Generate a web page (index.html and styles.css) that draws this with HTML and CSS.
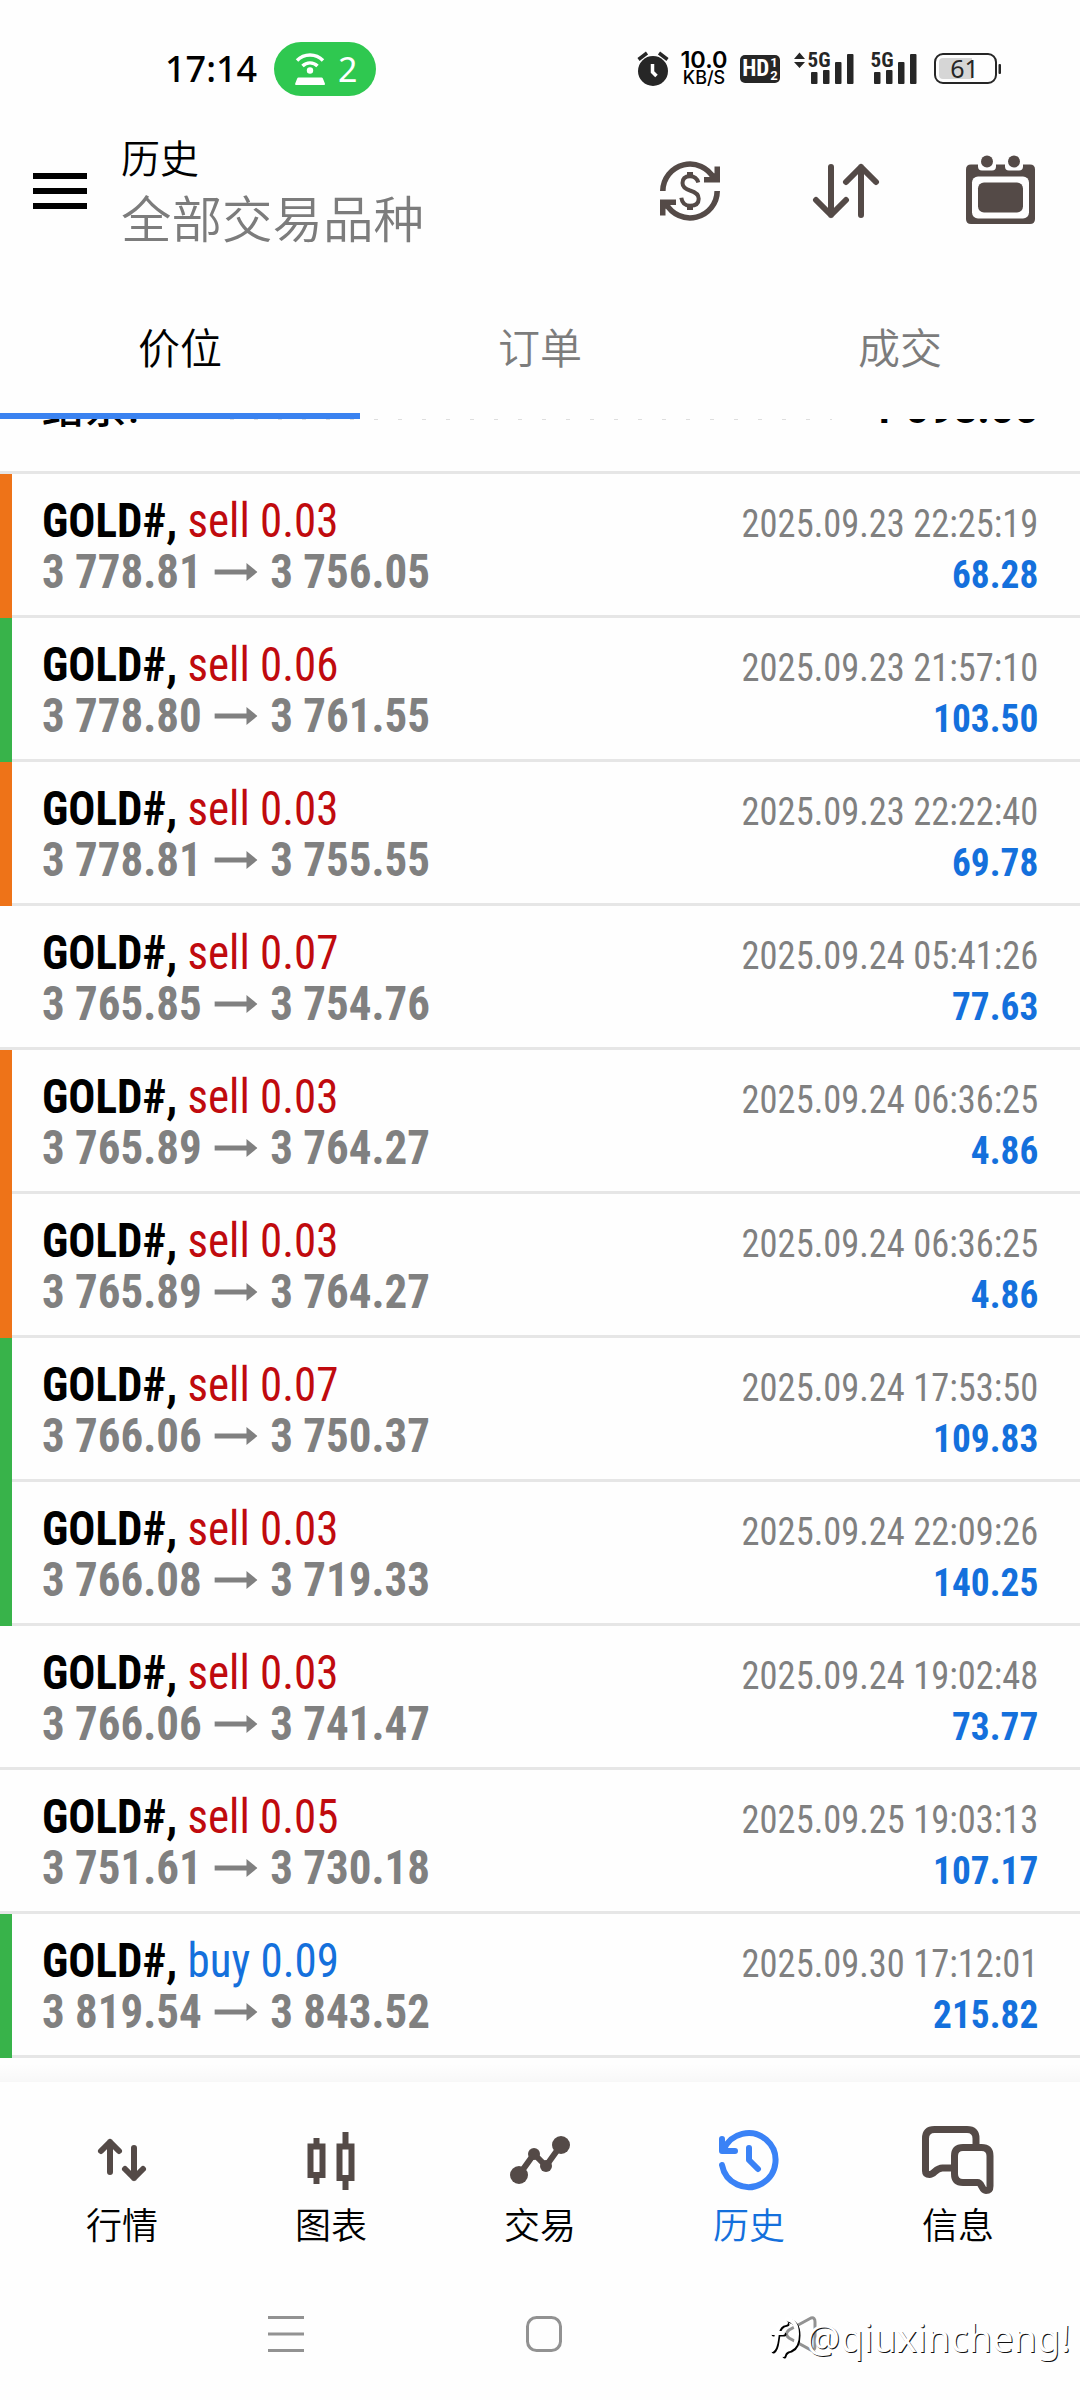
FILE: index.html
```html
<!DOCTYPE html>
<html lang="zh">
<head>
<meta charset="utf-8">
<title>历史</title>
<link rel="stylesheet" href="styles.css">
</head>
<body>
<div class="screen">
  <div class="status">
    <span class="clock">17:14</span>
    <div class="hotspot">
      <svg width="32" height="34" viewBox="0 0 32 34">
        <path d="M3 8.500a18 18 0 0 1 26 0M8.500 14a10.500 10.500 0 0 1 15 0" fill="none" stroke="#fff" stroke-width="3.400"/>
        <circle cx="16" cy="18.500" r="3.200" fill="#fff"/>
        <path d="M4.500 25.500h23q1 0 1.400 1l2 5q.6 1.500-1 1.500H2.200q-1.600 0-1-1.500l2-5q.3-1 1.300-1z" fill="#fff"/>
      </svg>
      <span>2</span>
    </div>
    <div class="indicators">
      <svg class="alarm" width="34" height="36" viewBox="0 0 34 36">
        <circle cx="17" cy="20" r="15" fill="#262626"/>
        <path d="M2.500 8.500l8.500-6.500M31.500 8.500L23 2" stroke="#262626" stroke-width="3.500" fill="none"/>
        <path d="M16.500 13v8l4 4" stroke="#fff" stroke-width="3.500" fill="none"/>
      </svg>
      <div class="rate"><b>10.0</b><span>KB/S</span></div>
      <div class="hd"><span class="hd-name">HD</span><span class="hd-sims"><i>1</i><i>2</i></span></div>
      <svg class="signal" width="62" height="36" viewBox="794 51 62 36">
        <path d="M795 59l5.500-6.500L806 59zM795 62h11l-5.500 6z" fill="#262626"/>
        <text x="808.500" y="67.300" class="net" textLength="23" lengthAdjust="spacingAndGlyphs">5G</text>
        <g fill="#262626"><rect x="812" y="72" width="6.500" height="12" rx="1"/><rect x="824" y="70" width="6.500" height="14" rx="1"/><rect x="836" y="62" width="6.500" height="22" rx="1"/><rect x="848" y="54" width="6.500" height="30" rx="1"/></g>
      </svg>
      <svg class="signal2" width="48" height="36" viewBox="871 51 48 36">
        <text x="871.500" y="67.300" class="net" textLength="23" lengthAdjust="spacingAndGlyphs">5G</text>
        <g fill="#262626"><rect x="875" y="72" width="6.500" height="12" rx="1"/><rect x="887" y="70" width="6.500" height="14" rx="1"/><rect x="899" y="62" width="6.500" height="22" rx="1"/><rect x="911" y="54" width="6.500" height="30" rx="1"/></g>
      </svg>
      <svg class="battery" width="68" height="32" viewBox="0 0 68 32">
        <rect x="1" y="1" width="61" height="29" rx="8" fill="none" stroke="#262626" stroke-width="2"/>
        <path d="M9 5h29v21H9q-4 0-4-4V9q0-4 4-4z" fill="#d6d6d6"/>
        <rect x="64.500" y="11" width="2.500" height="10" rx="1" fill="#262626"/>
        <text x="30.500" y="24.500" class="level" text-anchor="middle">61</text>
      </svg>
    </div>
  </div>

  <header class="appbar">
    <svg class="menu" width="54" height="36" viewBox="0 0 54 36"><path d="M0 3h54M0 18h54M0 33h54" stroke="#000" stroke-width="6"/></svg>
    <div class="titles"><div class="title">历史</div><div class="subtitle">全部交易品种</div></div>
    <svg class="i-currency" width="60" height="60" viewBox="0 0 60 60" fill="none" stroke="#544a47">
      <path d="M2.800 30A27.200 27.200 0 0 1 54 17.500M57.200 30A27.200 27.200 0 0 1 6 42.500" stroke-width="5.600"/>
      <path d="M60 5.500V21.500H44V16h6.500l4-4V5.500zM0 54.500V38.500h16V44H9.500l-4 4v6.500z" fill="#544a47" stroke="none"/>
      <path d="M38.300 21.500Q36.500 15.200 30 15.200q-7.500 0-7.500 6.800 0 5 7.500 7.500 8.700 2.500 8.700 8.300 0 7-8.700 7-7.500 0-8.700-8" stroke-width="4"/>
      <path d="M30 11v5M30 44v5" stroke-width="6"/>
    </svg>
    <svg class="i-sort" width="68" height="56" viewBox="0 0 68 56" fill="none" stroke="#544a47" stroke-width="6" stroke-linecap="round" stroke-linejoin="round"><path d="M19 4v48M4 37l15 15 15-15M49 52V4M34 19L49 4l15 15"/></svg>
    <svg class="i-calendar" width="70" height="70" viewBox="0 0 70 70">
      <path d="M5 9.500h59q5 0 5 5V64q0 5-5 5H5q-5 0-5-5V14.500q0-5 5-5z" fill="#544a47"/>
      <path d="M12 7h18v4.500q0 4-4 4H16q-4 0-4-4zM39 7h18v4.500q0 4-4 4H43q-4 0-4-4z" fill="#fefefe"/>
      <circle cx="21" cy="6.500" r="6" fill="#544a47"/><circle cx="48" cy="6.500" r="6" fill="#544a47"/>
      <rect x="6" y="21.500" width="57" height="42" rx="6" fill="#fefefe"/>
      <rect x="12" y="27.500" width="45" height="30" rx="6" fill="#544a47"/>
    </svg>
  </header>

  <nav class="tabs"><div class="tab active">价位</div><div class="tab">订单</div><div class="tab">成交</div></nav>

  <main class="list">
    <div class="summary"><span class="label">结余:</span><span class="leader"></span><span>1 098.66</span></div>
    <div id="deals"></div>
  </main>

  <nav class="bottom">
    <div class="item">
      <svg width="72" height="72" viewBox="86 2124 72 72" class="line"><path d="M110 2172v-30M101 2151l9-9 9 9M134 2148v30M125 2169l9 9 9-9"/></svg>
      <span>行情</span></div>
    <div class="item">
      <svg width="72" height="72" viewBox="295 2124 72 72" class="line square"><path d="M310.500 2146.500h12v28.500h-12zM316.500 2138v6M316.500 2177v7M339.500 2146.500h12v31.500h-12zM345.500 2132v12M345.500 2180v10"/></svg>
      <span>图表</span></div>
    <div class="item">
      <svg width="72" height="72" viewBox="504 2124 72 72" class="line"><path d="M519 2175l15-21 12 12 15-21"/><g fill="#544a47" stroke="none"><circle cx="519" cy="2175" r="9"/><circle cx="534" cy="2154" r="6"/><circle cx="546" cy="2166" r="6"/><circle cx="561" cy="2145" r="9"/></g></svg>
      <span>交易</span></div>
    <div class="item current">
      <svg width="72" height="72" viewBox="713 2124 72 72" class="line"><path d="M722 2139v12h13M723.500 2150A27 27 0 1 1 722 2165M749 2148v12l9 9"/></svg>
      <span>历史</span></div>
    <div class="item">
      <svg width="72" height="72" viewBox="922 2124 72 72" class="line chat"><path d="M976 2147v-8.500q0-9-9-9h-32.500q-9 0-9 9v32.500q0 3.500 4 3.500c5 0 6-6.500 13-6.500h11M963 2147.500h18.500q8.500 0 8.500 8.500v30q0 4.500-4 4.500c-4.500 0-4-8-8.500-8H963q-8.500 0-8.500-8.500V2156q0-8.500 8.500-8.500z"/></svg>
      <span>信息</span></div>
  </nav>

  <div class="sysnav">
    <svg width="36" height="36" viewBox="0 0 36 36"><path d="M0 1.500h36M0 18h36M0 34.500h36" stroke="#929292" stroke-width="3.200"/></svg>
    <svg width="36" height="36" viewBox="0 0 36 36"><rect x="1.500" y="1.500" width="33" height="33" rx="9" fill="none" stroke="#929292" stroke-width="3"/></svg>
    <svg width="36" height="36" viewBox="0 0 36 36"><path d="M27 2L5 14q-5 4 0 8l22 12q4 1 4-4V6q0-5-4-4z" fill="none" stroke="#929292" stroke-width="3"/></svg>
    <div class="watermark">
      <svg width="34" height="44" viewBox="0 0 34 44" fill="none" stroke-width="4" stroke-linecap="round">
        <g stroke="#000" transform="translate(1.500 1.500)"><path d="M3 35q3-2 4-10l1-7q1-9 9-10M3 18h11M18 4q10 2 10 15 0 12-7 15-6 1-7 6"/></g>
        <g stroke="#fff"><path d="M3 35q3-2 4-10l1-7q1-9 9-10M3 18h11M18 4q10 2 10 15 0 12-7 15-6 1-7 6"/></g>
      </svg>
      <span>@qiuxincheng!</span>
    </div>
  </div>
</div>
<script src="deals.js"></script>
</body>
</html>
```
FILE: styles.css
```css
* { box-sizing: border-box; }
body { margin: 0; background: #fefefe; font-family: "Noto Sans CJK SC", sans-serif; color: #000; }
svg { display: block; flex: none; }
.screen { width: 1080px; height: 2400px; overflow: hidden; display: flex; flex-direction: column; }

.status { height: 112px; padding: 25px 78px 0 165px; display: flex; align-items: center; font-family: "Noto Sans", sans-serif; }
.clock { width: 109px; font-size: 36px; font-weight: 500; white-space: nowrap; }
.hotspot { width: 102px; height: 54px; border-radius: 27px; background: #2fc850; color: #fff; display: flex; align-items: center; gap: 12px; padding-left: 20px; font-size: 34px; }
.indicators { margin-left: auto; display: flex; align-items: center; }
.alarm { margin-right: 10px; }
.rate { width: 48px; display: flex; flex-direction: column; align-items: center; font-family: Inter, sans-serif; white-space: nowrap; margin-right: 12px; }
.rate b { font-size: 23.5px; line-height: 19px; font-weight: 600; }
.rate span { font-size: 18px; line-height: 18px; font-weight: 500; }
.hd { width: 40px; height: 28px; border-radius: 5px; background: #262626; color: #fff; display: flex; align-items: center; justify-content: center; gap: 1px; font: 700 23px/28px "Roboto Condensed", sans-serif; margin-right: 13px; }
.hd-sims { display: flex; flex-direction: column; font: 700 13px/13px Roboto, sans-serif; }
.hd-sims i { font-style: normal; }
.net { font: 700 20px "Roboto Condensed", sans-serif; fill: #262626; }
.signal { margin-right: 15px; }
.signal2 { margin-right: 16px; }
.level { font: 400 25px "Noto Sans", sans-serif; fill: #262626; }

.appbar { height: 158px; padding: 0 44px 0 33px; display: flex; align-items: center; }
.titles { margin-left: 34px; padding-bottom: 8px; line-height: 59px; font-weight: 350; white-space: nowrap; }
.title { font-size: 39px; }
.subtitle { font-size: 50.5px; line-height: 61px; color: #7c7c7c; }
.i-currency { margin-left: auto; margin-right: 92px; }
.i-sort { margin-right: 86px; }
.i-calendar { margin-bottom: 3px; }

.tabs { height: 149px; display: grid; grid-template-columns: 1fr 1fr 1fr; }
.tab { padding-top: 8px; border-bottom: 6px solid transparent; text-align: center; font-size: 42px; line-height: 135px; font-weight: 350; color: #7c7c7c; }
.tab.active { color: #000; border-color: #3a82f0; }

.list { height: 1663px; overflow: hidden; position: relative; }
.list::after { content: ""; position: absolute; left: 0; right: 0; bottom: 0; height: 18px; background: linear-gradient(rgba(0,0,0,0), rgba(0,0,0,.028)); }
.summary { height: 90px; margin-top: -35px; padding: 0 42px; border-bottom: 3px solid #e6e6e6; display: flex; align-items: baseline; font: 700 42px/50px Roboto, "Noto Sans CJK SC", sans-serif; }
.label { width: 100px; font-weight: 500; letter-spacing: 1px; }
.leader { flex: 1; height: 1px; align-self: flex-start; margin: 35px 39px 0 88px; background: repeating-linear-gradient(90deg, #dedede 0 4px, transparent 4px 24px); }

.deal { height: 144px; display: grid; grid-template-columns: 12px 1fr auto; font-family: "Roboto Condensed", sans-serif; line-height: 51px; white-space: nowrap; }
.mark, .left, .right { border-bottom: 3px solid #e6e6e6; }
.mark.tp { background: #38b34a; }
.mark.sl { background: #ee7318; }
.mark.tp, .mark.sl { border-bottom: 0; }
.left { padding: 21px 0 0 30px; font-size: 48px; }
.right { padding: 25px 42px 0 0; font-size: 39px; text-align: right; }
.order, .prices { transform: scaleX(.937); transform-origin: left; }
.symbol { font-weight: 700; }
.sell { color: #c00a0e; }
.buy { color: #1470dc; }
.prices { font-weight: 700; color: #808080; display: flex; align-items: center; }
.prices svg { margin: 0 13.5px; }
.time { color: #808080; transform: scaleX(.935); transform-origin: right; }
.profit { color: #1470dc; font-weight: 700; transform: scaleX(.957); transform-origin: right; }

.bottom { height: 186px; padding: 42px 17.5px 0; display: grid; grid-template-columns: repeat(5, 1fr); }
.item { display: flex; flex-direction: column; align-items: center; font-size: 36px; line-height: 54px; font-weight: 350; }
.item.current { color: #1470dc; }
.line { fill: none; stroke: #544a47; stroke-width: 6; stroke-linecap: round; stroke-linejoin: round; }
.line.square { stroke-linecap: butt; stroke-linejoin: miter; }
.line.chat { stroke-width: 7; }
.current .line { stroke: #3a82f6; }

.sysnav { height: 132px; padding: 48px 226px 0 268px; display: flex; gap: 222px; position: relative; }
.watermark { position: absolute; left: 769px; top: 47px; display: flex; align-items: flex-start; gap: 3px; color: #fff; font: 400 38px/44px "Noto Sans", sans-serif; text-shadow: 1px 1px 0 #111; white-space: nowrap; }
```
FILE: deals.js
```js
const deals = [
  ["sl", "sell", "0.03", "3 778.81", "3 756.05", "2025.09.23 22:25:19", "68.28"],
  ["tp", "sell", "0.06", "3 778.80", "3 761.55", "2025.09.23 21:57:10", "103.50"],
  ["sl", "sell", "0.03", "3 778.81", "3 755.55", "2025.09.23 22:22:40", "69.78"],
  ["", "sell", "0.07", "3 765.85", "3 754.76", "2025.09.24 05:41:26", "77.63"],
  ["sl", "sell", "0.03", "3 765.89", "3 764.27", "2025.09.24 06:36:25", "4.86"],
  ["sl", "sell", "0.03", "3 765.89", "3 764.27", "2025.09.24 06:36:25", "4.86"],
  ["tp", "sell", "0.07", "3 766.06", "3 750.37", "2025.09.24 17:53:50", "109.83"],
  ["tp", "sell", "0.03", "3 766.08", "3 719.33", "2025.09.24 22:09:26", "140.25"],
  ["", "sell", "0.03", "3 766.06", "3 741.47", "2025.09.24 19:02:48", "73.77"],
  ["", "sell", "0.05", "3 751.61", "3 730.18", "2025.09.25 19:03:13", "107.17"],
  ["tp", "buy", "0.09", "3 819.54", "3 843.52", "2025.09.30 17:12:01", "215.82"]
];
const arrow = '<svg width="46" height="18" viewBox="0 0 43 18" preserveAspectRatio="none" fill="#808080"><path d="M0 6.500h32V0l11 9-11 9v-6.500H0z"/></svg>';
document.getElementById("deals").innerHTML = deals.map(([mark, side, lots, open, close, time, profit]) => `
  <div class="deal">
    <div class="mark ${mark}"></div>
    <div class="left"><div class="order"><span class="symbol">GOLD#,</span> <span class="${side}">${side} ${lots}</span></div>
      <div class="prices">${open}${arrow}${close}</div></div>
    <div class="right"><div class="time">${time}</div><div class="profit">${profit}</div></div>
  </div>`).join("");
```
